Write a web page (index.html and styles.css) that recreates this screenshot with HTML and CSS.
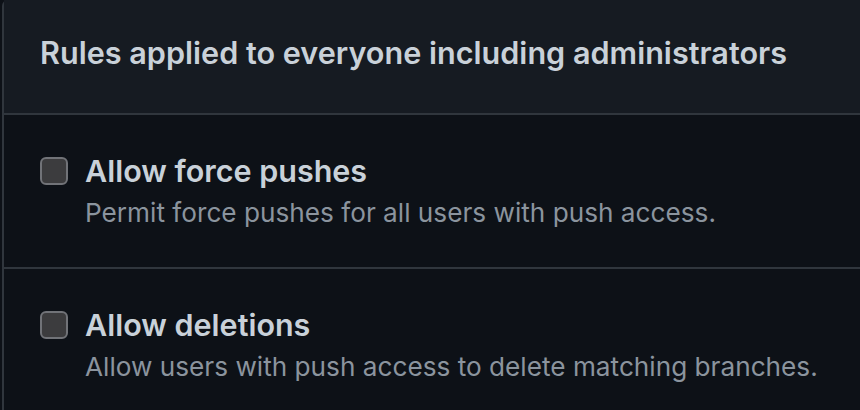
FILE: index.html
```html
<!DOCTYPE html>
<html>
<head>
<meta charset="utf-8">
<link rel="stylesheet" href="styles.css">
</head>
<body>
<div class="box">
  <div class="box-header">
    <h3 class="box-title">Rules applied to everyone including administrators</h3>
  </div>
  <div class="rule">
    <span class="checkbox"></span>
    <div class="rule-text">
      <div class="rule-title">Allow force pushes</div>
      <div class="rule-desc">Permit force pushes for all users with push access.</div>
    </div>
  </div>
  <div class="rule">
    <span class="checkbox"></span>
    <div class="rule-text">
      <div class="rule-title">Allow deletions</div>
      <div class="rule-desc">Allow users with push access to delete matching branches.</div>
    </div>
  </div>
</div>
</body>
</html>
```

FILE: styles.css
```css
html, body {
  margin: 0;
  padding: 0;
  background: #0d1117;
  height: 100%;
  overflow: hidden;
}
body {
  font-family: Inter, "Noto Sans", sans-serif;
  color: #c9d1d9;
}
.box {
  margin-left: 2px;
  border-left: 2px solid #30363d;
  border-top-left-radius: 6px;
  min-height: 410px;
}
.box-header {
  height: 115px;
  box-sizing: border-box;
  background: #161b22;
  border-bottom: 2px solid #30363d;
  display: flex;
  align-items: center;
  padding: 0 0 8px 36px;
}
.box-title {
  margin: 0;
  font-size: 30.6px;
  font-weight: 600;
  line-height: 36px;
  color: #c9d1d9;
}
.rule {
  display: flex;
  align-items: flex-start;
  gap: 17px;
  padding: 40px 0 0 36px;
  height: 112px;
  border-bottom: 2px solid #30363d;
}
.rule:last-child {
  border-bottom: none;
}
.checkbox {
  flex: none;
  margin-top: 2px;
  width: 24px;
  height: 24px;
  border: 2px solid #717378;
  border-radius: 6px;
  background: #3c3c3e;
}
.rule-title {
  font-size: 30.5px;
  font-weight: 600;
  line-height: 32px;
  color: #c9d1d9;
}
.rule-desc {
  margin-top: 10px;
  font-size: 26.2px;
  line-height: 32px;
  color: #8b949e;
}
```
